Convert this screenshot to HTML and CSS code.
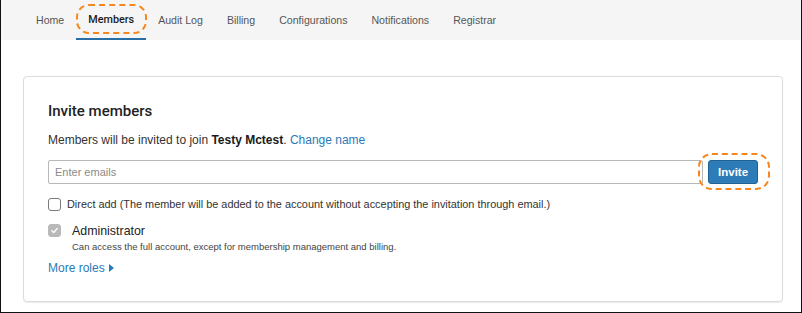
FILE: index.html
```html
<!DOCTYPE html>
<html>
<head>
<meta charset="utf-8">
<link rel="stylesheet" href="styles.css">
</head>
<body>
<div class="frame">
  <nav class="tabs">
    <a class="tab">Home</a>
    <a class="tab active">Members</a>
    <a class="tab">Audit Log</a>
    <a class="tab">Billing</a>
    <a class="tab">Configurations</a>
    <a class="tab">Notifications</a>
    <a class="tab">Registrar</a>
  </nav>
  <main class="main">
    <section class="card">
      <h2 class="title">Invite members</h2>
      <p class="lead">Members will be invited to join <b>Testy Mctest</b>. <a class="link">Change name</a></p>
      <div class="invite-row">
        <input class="emails" type="text" placeholder="Enter emails">
        <button class="btn">Invite</button>
      </div>
      <label class="check-row">
        <span class="box"></span>
        <span>Direct add (The member will be added to the account without accepting the invitation through email.)</span>
      </label>
      <div class="role">
        <span class="box checked">
          <svg viewBox="0 0 12 12" width="9" height="9"><path d="M2.5 6.2 L5 8.6 L9.6 3.4" fill="none" stroke="#fff" stroke-width="1.8" stroke-linecap="round" stroke-linejoin="round"/></svg>
        </span>
        <div class="role-text">
          <div class="role-name">Administrator</div>
          <div class="role-desc">Can access the full account, except for membership management and billing.</div>
        </div>
      </div>
      <a class="link more">More roles <span class="tri"></span></a>
    </section>
  </main>
  <span class="mark mark-tab"></span>
  <span class="mark mark-btn"></span>
</div>
</body>
</html>
```
FILE: styles.css
```css
* { box-sizing: border-box; }
html, body { margin: 0; padding: 0; }
body {
  font-family: "Liberation Sans", Arial, sans-serif;
  color: #222;
  background: #fff;
}
.frame {
  position: relative;
  width: 802px;
  height: 313px;
  border-left: 1px solid #111;
  border-right: 1px solid #111;
  border-bottom: 1px solid #111;
  overflow: hidden;
}
.tabs {
  display: flex;
  height: 40px;
  background: #f5f5f5;
  padding-left: 23px;
}
.tab {
  display: flex;
  align-items: center;
  padding: 0 12px;
  font-size: 10.6px;
  color: #555;
  border-bottom: 2px solid transparent;
  padding-top: 1px;
}
.tab.active {
  color: #1d1d1d;
  border-bottom-color: #2a6ea8;
  font-family: Roboto, "Liberation Sans", sans-serif;
  font-weight: 500;
  font-size: 10.8px;
}
.main {
  padding: 36px 18px 0 22px;
}
.card {
  border: 1px solid #dcdcdc;
  border-radius: 4px;
  box-shadow: 0 1px 1px rgba(0,0,0,0.08);
  padding: 24px 24px 24px 24px;
  height: 226px;
}
.title {
  margin: 0;
  font-family: Roboto, "Liberation Sans", sans-serif;
  font-weight: 500;
  font-size: 15px;
  line-height: 20px;
  color: #222;
}
.lead {
  margin: 10px 0 0;
  font-size: 12px;
  line-height: 18px;
  color: #333;
}
.lead b { color: #1a1a1a; }
.link { color: #2a7ab8; }
.invite-row {
  display: flex;
  align-items: center;
  gap: 5px;
  margin-top: 11px;
}
.emails {
  width: 657px;
  height: 24px;
  border: 1px solid #b8b8b8;
  border-radius: 2px;
  padding: 0 6px;
  font-family: "Liberation Sans", Arial, sans-serif;
  font-size: 11px;
  color: #333;
  outline: none;
}
.emails::placeholder { color: #8a8a8a; }
.btn {
  width: 50px;
  height: 24px;
  background: #2d7cb8;
  border: 1px solid #1f6298;
  border-radius: 3px;
  color: #fff;
  font-family: "Liberation Sans", Arial, sans-serif;
  font-size: 11.5px;
  font-weight: 700;
  padding: 0;
}
.check-row {
  display: flex;
  align-items: center;
  gap: 6px;
  margin-top: 11px;
  font-size: 10.9px;
  line-height: 18px;
  color: #333;
}
.box {
  width: 13px;
  height: 13px;
  border: 1px solid #7a7a7a;
  border-radius: 3px;
  flex: none;
  display: flex;
  align-items: center;
  justify-content: center;
  background: #fff;
}
.box.checked {
  background: #b9b9b9;
  border-color: #b9b9b9;
}
.role {
  display: flex;
  gap: 11px;
  margin-top: 9px;
}
.role .box { margin-top: 2px; }
.role-name {
  font-size: 12.4px;
  line-height: 18px;
  color: #222;
}
.role-desc {
  font-size: 9.5px;
  line-height: 14px;
  color: #444;
}
.more {
  display: inline-flex;
  align-items: center;
  gap: 4px;
  margin-top: 5px;
  font-size: 12px;
  line-height: 18px;
}
.tri {
  width: 0;
  height: 0;
  border-top: 4px solid transparent;
  border-bottom: 4px solid transparent;
  border-left: 5px solid #2a7ab8;
}
.mark {
  position: absolute;
  border: 2px dashed #f7861c;
  border-radius: 13px;
}
.mark-tab { left: 75px; top: 4px; width: 71px; height: 30px; }
.mark-btn { left: 697px; top: 153px; width: 72px; height: 37px; border-radius: 14px; }
```
